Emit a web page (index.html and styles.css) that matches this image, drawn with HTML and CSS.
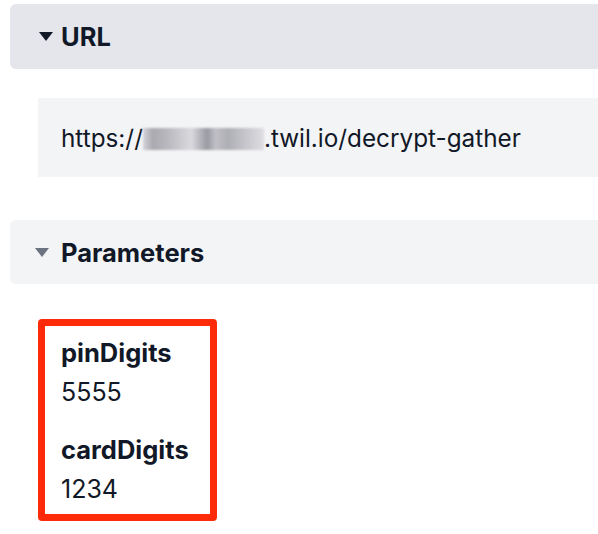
FILE: index.html
```html
<!DOCTYPE html>
<html>
<head>
<meta charset="utf-8">
<link rel="stylesheet" href="styles.css">
</head>
<body>
<div class="page">
  <div class="section-head url-head">
    <svg class="caret" width="14" height="9" viewBox="0 0 14 9"><path d="M0 0H14L7 9Z" fill="#111827"/></svg>
    <span class="head-title">URL</span>
  </div>
  <div class="url-box">
    <span class="url-text">https://</span><span class="blur"></span><span class="url-text">.twil.io/decrypt-gather</span>
  </div>
  <div class="section-head param-head">
    <svg class="caret" width="14" height="9" viewBox="0 0 14 9"><path d="M0 0H14L7 9Z" fill="#6b7280"/></svg>
    <span class="head-title">Parameters</span>
  </div>
  <div class="params">
    <div class="param">
      <div class="param-name">pinDigits</div>
      <div class="param-value">5555</div>
    </div>
    <div class="param">
      <div class="param-name">cardDigits</div>
      <div class="param-value">1234</div>
    </div>
  </div>
</div>
</body>
</html>
```

FILE: styles.css
```css
html, body {
  margin: 0;
  padding: 0;
  background: #ffffff;
  overflow: hidden;
}
.page {
  width: 598px;
  padding-top: 4px;
  font-family: Inter, "Noto Sans", sans-serif;
  color: #111827;
}
.section-head {
  margin-left: 10px;
  display: flex;
  align-items: center;
  border-radius: 6px 0 0 6px;
}
.url-head {
  height: 65px;
  background: #e4e6ec;
  padding-left: 29px;
  gap: 8px;
}
.param-head {
  margin-top: 43px;
  height: 64px;
  background: #f3f4f6;
  padding-left: 25px;
  gap: 12px;
}
.caret {
  flex: none;
}
.head-title {
  font-weight: 700;
  font-size: 25.5px;
}
.url-box {
  margin-left: 38px;
  margin-top: 29px;
  height: 79px;
  background: #f3f4f6;
  padding-left: 23px;
  display: flex;
  align-items: center;
  font-size: 24.3px;
  white-space: nowrap;
}
.blur {
  display: inline-block;
  flex: none;
  width: 121px;
  height: 22px;
  margin-top: 2px;
  background: linear-gradient(90deg, #d4d4da 0, #a9a9b0 8%, #b8b8be 20%, #c9c9ce 30%, #d9d9de 40%, #b2b2b8 48%, #999aa2 53%, #c0c0c6 60%, #aeaeb5 70%, #c6c6cc 85%, #dedee2 100%);
  filter: blur(1px);
}
.params {
  box-sizing: border-box;
  margin-left: 38px;
  margin-top: 35px;
  width: 179px;
  height: 202px;
  border: 7px solid #ff2a0a;
  border-radius: 4px;
  padding-left: 16px;
  padding-top: 12px;
  display: flex;
  flex-direction: column;
  gap: 28px;
}
.param-name {
  font-weight: 700;
  font-size: 25.5px;
  line-height: 30px;
}
.param-value {
  font-size: 25px;
  line-height: 30px;
  margin-top: 9px;
}
```
